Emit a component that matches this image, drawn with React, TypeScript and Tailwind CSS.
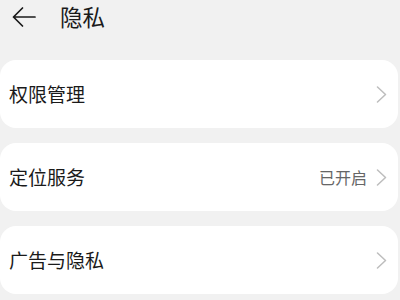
const font = { fontFamily: '"Noto Sans CJK SC", "Noto Sans", sans-serif' };

function Chevron() {
  return (
    <svg width="11" height="17" viewBox="0 0 11 17" fill="none" stroke="#bdbdbd" strokeWidth="1.5" strokeLinecap="round" strokeLinejoin="round">
      <path d="M1.5 1l8 7.5-8 7.5" />
    </svg>
  );
}

function Row({ label, value }: { label: string; value?: string }) {
  return (
    <div className="h-[68px] w-[398px] bg-white rounded-2xl flex items-center justify-between pl-[9px] pr-[11px]">
      <span className="text-[19px] text-[#1a1a1a]">{label}</span>
      <div className="flex items-center gap-[9px]">
        {value && <span className="text-[16px] text-[#666]">{value}</span>}
        <Chevron />
      </div>
    </div>
  );
}

export default function App() {
  return (
    <div className="w-[400px] h-[300px] bg-[#f1f1f1] overflow-hidden" style={font}>
      <div className="h-[34px] flex items-center pl-[12px]">
        <svg width="24" height="22" viewBox="0 0 24 22" fill="none" stroke="#1a1a1a" strokeWidth="1.7" strokeLinecap="round" strokeLinejoin="round">
          <path d="M23 11H1.5M10.5 2L1.5 11l9 9" />
        </svg>
        <span className="ml-[24px] text-[22.5px] text-[#1a1a1a]">隐私</span>
      </div>
      <div className="flex flex-col gap-[15px] mt-[26px]">
        <Row label="权限管理" />
        <Row label="定位服务" value="已开启" />
        <Row label="广告与隐私" />
      </div>
    </div>
  );
}
